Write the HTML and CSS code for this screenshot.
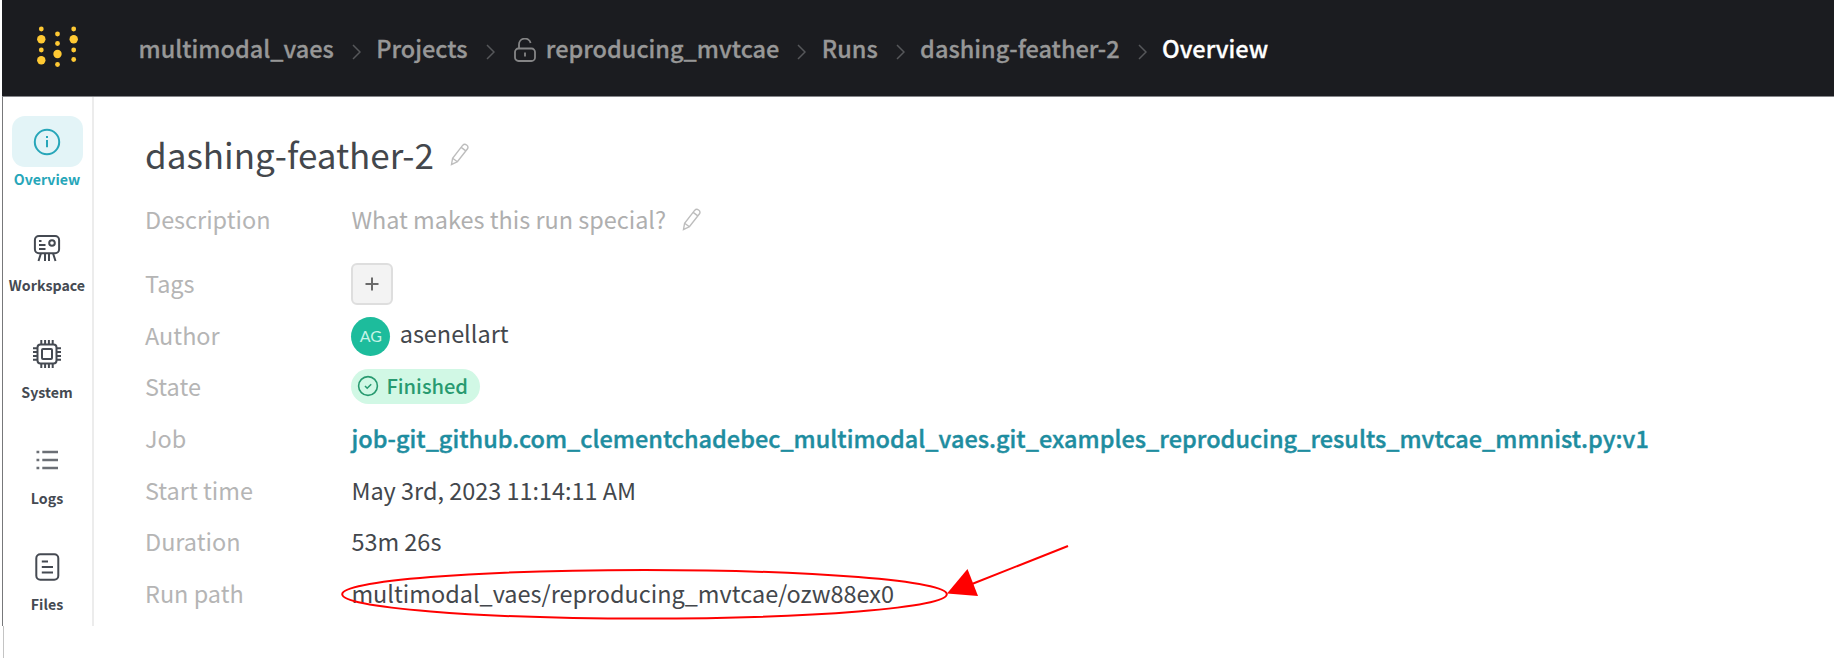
FILE: index.html
```
<!DOCTYPE html>
<html lang="en">
<head>
<meta charset="utf-8">
<title>dashing-feather-2 – Overview</title>
<link rel="stylesheet" href="styles.css">
</head>
<body>
<svg class="defs" width="0" height="0" aria-hidden="true">
  <symbol id="pencil" viewBox="0 0 20 23">
    <path d="M1.5 21.5 L2.6 15.2 L12.6 2.4 Q14.4 .5 16.6 2 Q18.8 3.7 17.5 5.8 L7.4 18.8 Z M11.2 4.4 L15.8 7.9 M2.6 15.2 L7.4 18.8"/>
  </symbol>
  <symbol id="chevron" viewBox="0 0 9 16"><path d="M1 1 L8 8 L1 15"/></symbol>
</svg>

<header class="topbar">
  <svg class="logo" width="42" height="44" viewBox="0 0 42 44">
    <circle cx="5.3" cy="5" r="2.4"/><circle cx="5.3" cy="15.3" r="4.2"/><circle cx="5.3" cy="26" r="2.4"/><circle cx="5.3" cy="36.3" r="4.2"/>
    <circle cx="21.5" cy="10" r="2.4"/><circle cx="21.5" cy="19.5" r="2.4"/><circle cx="21.5" cy="30" r="4.2"/><circle cx="21.5" cy="40.5" r="2.4"/>
    <circle cx="37.7" cy="5" r="2.4"/><circle cx="37.7" cy="15.3" r="4.2"/><circle cx="37.7" cy="26" r="2.4"/><circle cx="37.7" cy="35.5" r="2.4"/>
  </svg>
  <nav class="crumbs">
    <span>multimodal_vaes</span>
    <svg class="sep"><use href="#chevron"/></svg>
    <span>Projects</span>
    <svg class="sep"><use href="#chevron"/></svg>
    <svg class="lock" width="22" height="24" viewBox="0 0 22 24"><rect x="1" y="10.5" width="20" height="12.5" rx="3.5"/><path d="M5 10.5 V6.8 A5.9 5.9 0 0 1 16.6 5 M11 14.5 V18.5"/></svg>
    <span>reproducing_mvtcae</span>
    <svg class="sep"><use href="#chevron"/></svg>
    <span>Runs</span>
    <svg class="sep"><use href="#chevron"/></svg>
    <span>dashing-feather-2</span>
    <svg class="sep"><use href="#chevron"/></svg>
    <span class="current">Overview</span>
  </nav>
</header>

<div class="body">
  <aside class="sidebar">
    <div class="item active">
      <div class="tile"><svg width="30" height="30" viewBox="0 0 30 30"><circle cx="15" cy="15" r="12.2"/><path d="M15 13 V20.3 M15 9 V11"/></svg></div>
      <span>Overview</span>
    </div>
    <div class="item">
      <div class="tile"><svg width="30" height="30" viewBox="0 0 30 30"><rect x="2.9" y="3" width="24.2" height="17.2" rx="4"/><circle cx="20" cy="10" r="2.8"/><path d="M7 8 H9.5 M7 12 H13.5 M7 16 H13.5 M9 20.2 L6.5 28 M13 20.2 V28 M17 20.2 V28 M21 20.2 L23.5 28"/></svg></div>
      <span>Workspace</span>
    </div>
    <div class="item">
      <div class="tile"><svg width="30" height="30" viewBox="0 0 30 30"><rect x="5.5" y="5.5" width="19" height="19" rx="3"/><rect x="10" y="10" width="10" height="10" rx="1"/><path d="M9.3 5 V1 M13.1 5 V1 M16.9 5 V1 M20.7 5 V1 M9.3 25 V29 M13.1 25 V29 M16.9 25 V29 M20.7 25 V29 M5 9.3 H1 M5 13.1 H1 M5 16.9 H1 M5 20.7 H1 M25 9.3 H29 M25 13.1 H29 M25 16.9 H29 M25 20.7 H29"/></svg></div>
      <span>System</span>
    </div>
    <div class="item">
      <div class="tile"><svg class="logs" width="30" height="30" viewBox="0 0 30 30"><path d="M4.5 7 H7.3 M4.5 15 H7.3 M4.5 23 H7.3 M10.3 7 H26 M10.3 15 H26 M10.3 23 H26"/></svg></div>
      <span>Logs</span>
    </div>
    <div class="item">
      <div class="tile"><svg width="30" height="30" viewBox="0 0 30 30"><rect x="4.3" y="2.3" width="22" height="25.4" rx="4"/><path d="M9.8 9.5 H16 M9.8 15 H21 M9.8 20.5 H21"/></svg></div>
      <span>Files</span>
    </div>
  </aside>

  <main class="content">
    <h1>dashing-feather-2 <svg class="pencil"><use href="#pencil"/></svg></h1>
    <dl>
      <dt>Description</dt>
      <dd class="muted">What makes this run special? <svg class="pencil"><use href="#pencil"/></svg></dd>
      <dt>Tags</dt>
      <dd><button class="add" aria-label="Add tag"><svg width="14" height="14" viewBox="0 0 14 14"><path d="M7 0.5 V13.5 M.5 7 H13.5"/></svg></button></dd>
      <dt>Author</dt>
      <dd><span class="avatar">AG</span><span class="author">asenellart</span></dd>
      <dt>State</dt>
      <dd><span class="state"><svg width="22" height="22" viewBox="0 0 22 22"><circle cx="11" cy="11" r="9.4"/><path d="M8 11 L10.2 13.2 L14.2 9.2"/></svg>Finished</span></dd>
      <dt>Job</dt>
      <dd class="job">job-git_github.com_clementchadebec_multimodal_vaes.git_examples_reproducing_results_mvtcae_mmnist.py:v1</dd>
      <dt>Start time</dt>
      <dd>May 3rd, 2023 11:14:11 AM</dd>
      <dt>Duration</dt>
      <dd>53m 26s</dd>
      <dt>Run path</dt>
      <dd>multimodal_vaes/reproducing_mvtcae/ozw88ex0</dd>
    </dl>
  </main>
</div>
<div class="foot"></div>

<svg class="annotation" width="740" height="90" viewBox="335 540 740 90">
  <ellipse cx="644.5" cy="594.3" rx="302.3" ry="24.3"/>
  <path d="M1068 546 L972 584"/>
  <polygon points="947,593.5 967.5,569 978,596"/>
</svg>
</body>
</html>
```
FILE: styles.css
```
* { box-sizing: border-box; }
body {
  margin: 0;
  width: 1834px;
  height: 658px;
  overflow: hidden;
  position: relative;
  background: #fff;
  color: #43474c;
  font: 400 23.45px "Noto Sans CJK SC", "Noto Sans", sans-serif;
}
svg { fill: none; stroke: currentColor; flex: none; }
.defs { position: absolute; }

.topbar {
  margin-left: 2px;
  height: 97px;
  background: #1b1c20;
  border-bottom: 1px solid #85868a;
  display: flex;
  align-items: center;
  color: #979797;
}
.logo { margin: 0 0 4px 34px; fill: #ffc933; stroke: none; }
.crumbs {
  margin-left: 60.5px;
  display: flex;
  align-items: center;
  font-size: 23.5px;
  font-weight: 500;
  line-height: 40px;
  white-space: nowrap;
  -webkit-text-stroke: .3px currentColor;
}
.sep { width: 9px; height: 16px; margin: 7px 15.4px 0 18px; stroke: #56575a; stroke-width: 1.5; }
.lock { margin: 4px 10px 0 3.8px; stroke-width: 1.8; stroke: #858586; }
.current { color: #fff; }

.body { display: flex; height: 529px; margin-left: 2px; border-left: 1px solid #77787a; }
.sidebar {
  width: 91px;
  border-right: 2.5px solid #ececec;
  padding: 19px 1px 0 0;
  display: flex;
  flex-direction: column;
  gap: 31.3px;
}
.item {
  display: flex;
  flex-direction: column;
  align-items: center;
  color: #454a52;
  font-size: 14.2px;
  font-weight: 700;
  line-height: 23px;
}
.item span { padding-top: 1px; }
.item svg { stroke-width: 2; }
.item .logs { stroke-width: 2.5; color: #6b6f75; }
.tile {
  width: 71px;
  height: 51px;
  border-radius: 13px;
  display: flex;
  align-items: center;
  justify-content: center;
}
.active { color: #27a6b9; }
.active .tile { background: #e3f4f7; }

.content { padding-left: 51px; flex: 1; }
h1 {
  margin: 0;
  padding-top: 29px;
  height: 84px;
  font-size: 35px;
  font-weight: 400;
  line-height: 56px;
  display: flex;
  align-items: center;
}
h1 .pencil { margin: 1px 0 0 16px; }
.pencil { width: 20px; height: 23px; color: #bdbdbd; stroke-width: 1.4; }
dl {
  margin: 0;
  display: grid;
  grid-template-columns: 206.4px 1fr;
  grid-template-rows: 76px 52px repeat(6, 51.6px);
  align-items: center;
  line-height: 34px;
  white-space: nowrap;
}
dt { color: #b5b5b5; }
dd { margin: 0; display: flex; align-items: center; }
.muted { color: #afafaf; }
.muted .pencil { margin: 1px 0 0 16px; }
.add {
  width: 42px;
  height: 42px;
  margin-top: 1px;
  padding: 0;
  border: 2px solid #dedede;
  border-radius: 6px;
  background: #f3f3f3;
  color: #6a6a6a;
  display: flex;
  align-items: center;
  justify-content: center;
}
.add svg { stroke-width: 2; }
.avatar {
  width: 39px;
  height: 39px;
  margin-top: 3px;
  border-radius: 50%;
  background: #1dbc9c;
  color: #c5f3e6;
  font: 16px/38px Lato, sans-serif;
  text-align: center;
}
.author { margin: -3px 0 0 9.3px; }
.state {
  height: 35px;
  padding: 0 12px 0 6px;
  border-radius: 18px;
  background: #d1f8e5;
  color: #289a70;
  display: flex;
  align-items: center;
  gap: 7px;
  font-size: 20.1px;
  font-weight: 500;
}
.state svg { stroke-width: 1.6; }
.job { color: #1e8da0; font-weight: 500; letter-spacing: .037px; -webkit-text-stroke: .4px #1e8da0; }
.foot { height: 32px; margin-left: 3px; border-left: 1px solid #c4c4c4; }

.annotation { position: absolute; left: 335px; top: 540px; stroke: #f00; stroke-width: 2; }
.annotation polygon { fill: #f00; stroke: none; }
```
